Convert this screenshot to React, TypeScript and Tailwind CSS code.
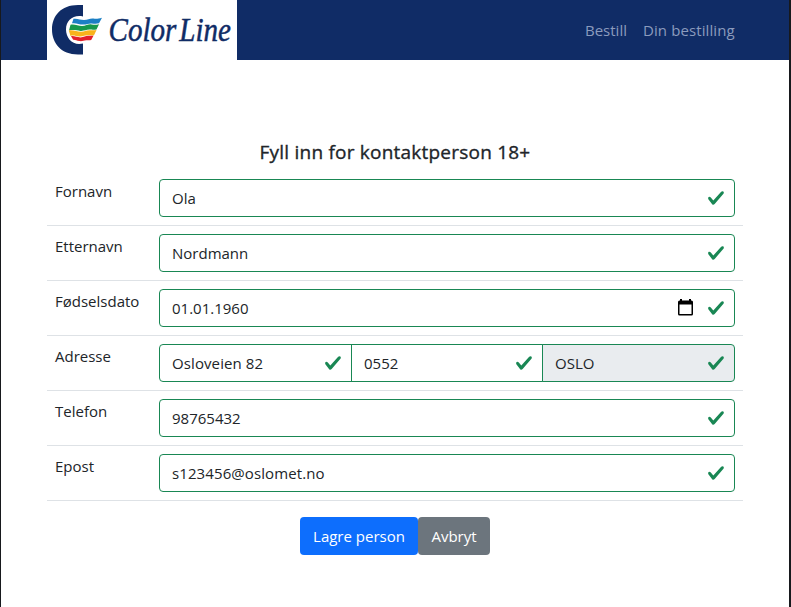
import type { ReactNode } from "react";

function Check() {
  return (
    <svg viewBox="0 0 8 8" className="h-[18px] w-[18px] shrink-0" fill="#198754">
      <path d="M2.3 6.73L.6 4.53c-.4-1.04.46-1.4 1.1-.8l1.1 1.4 3.4-3.8c.6-.63 1.6-.27 1.2.7l-4 4.6c-.43.5-.8.4-1.1.1z" />
    </svg>
  );
}

function CalendarIcon() {
  return (
    <svg viewBox="0 0 15 17" className="mr-[14px] mb-[2px] h-[17px] w-[15px] shrink-0">
      <path d="M2 0h2v1.5h7V0h2v1.5h.5A1.5 1.5 0 0 1 15 3v12a1.5 1.5 0 0 1-1.5 1.5h-12A1.5 1.5 0 0 1 0 15V3a1.5 1.5 0 0 1 1.5-1.5H2zM1.5 5.5V15h12V5.5z" fill="#000" fillRule="evenodd" />
    </svg>
  );
}

function Field({ value, className, text = "", children }: { value: string; className: string; text?: string; children?: ReactNode }) {
  return (
    <div className={`flex h-[38px] items-center border border-[#198754] pl-3 pr-[9px] ${className}`}>
      <span className={`min-w-0 flex-1 whitespace-nowrap leading-6 ${text}`}>{value}</span>
      {children}
      <Check />
    </div>
  );
}

function Row({ label, children }: { label: string; children: ReactNode }) {
  return (
    <div className="flex h-[55px] border-b border-[#dee2e6] px-2 pt-2">
      <div className="w-[104px] shrink-0 whitespace-nowrap leading-6">{label}</div>
      <div className="flex flex-1">{children}</div>
    </div>
  );
}

function Logo() {
  return (
    <svg viewBox="0 0 190 60" className="h-[60px] w-[190px] bg-white" role="img" aria-label="Color Line">
      <path d="M36 5H31C14 5 5 16 5 29.5S14 54.5 31 54.5h5V43.5C26 46 19 38.500 19 29.5S26 14.500 36 16.5z" fill="#102c66" />
      <path d="M26.500 18.800c4-.6 7 1.200 10.500 1.200 4 0 6-2 9.500-1.500 3 .5 5 0 8.500-.8l-3 5.600c-3 .8-5 .3-7.500.1-3-.2-5 1.400-8.500 1.200-4-.2-7-2-11-1.300z" fill="#1b7fc4" />
      <path d="M23.500 24.700c4-1 7.500 1.300 11.500 1.300s6-2 9.500-1.600c3 .3 4 .6 7.500-.2l-2.500 5.200c-3 .8-4 .2-7 .2-3.500 0-5 1.500-9 1.300-4-.2-7-1.500-11.500-.3z" fill="#16984c" />
      <path d="M21.800 30.400c4-1 8.200 1.300 12.200 1.300s5-1.700 9-1.500c2.500.2 4 .3 6.500-.2L47 35.200c-2 .5-4 .1-6 .1-3.500 0-5 1.400-8.500 1.200-3.500-.2-6-1.500-9-.6z" fill="#f9b31b" />
      <path d="M24 36.200c3-.6 6 1.200 9.500 1.200s5-1.700 8-1.600c2 0 3 .2 5-.1L44.200 40c-2 .3-3 .1-5 .2-2.500.2-4 1.300-7 .8-2.500-.4-4-1.400-6-1.200z" fill="#e3202a" />
      <text x="61.500" y="41" textLength="122.500" lengthAdjust="spacingAndGlyphs" className="font-['Liberation_Serif'] text-[34px] italic [word-spacing:-5px]" fill="#102c66" stroke="#102c66" strokeWidth=".5">Color Line</text>
    </svg>
  );
}

export default function App() {
  return (
    <div className="h-[607px] w-[791px] overflow-hidden border-l border-r-2 border-[#17191d] bg-white font-['Open_Sans','Noto_Sans',sans-serif] text-[15px] text-[#212529]">
      <header className="flex h-[60px] items-center justify-between bg-[#102c66] pl-[46px] pr-[54px]">
        <Logo />
        <nav className="flex gap-4 whitespace-nowrap leading-6 text-[#8b9bbd]">
          <a className="w-[42px]">Bestill</a>
          <a className="w-[92px] tracking-[0.1px]">Din bestilling</a>
        </nav>
      </header>
      <main className="px-[46px] pt-[80px]">
        <h1 className="h-[31px] w-[696px] text-center text-[19px] font-medium leading-6 tracking-[0.22px] [-webkit-text-stroke:0.35px]">Fyll inn for kontaktperson 18+</h1>
        <div className="w-[696px]">
          <Row label="Fornavn"><Field value="Ola" className="flex-1 rounded" /></Row>
          <Row label="Etternavn"><Field value="Nordmann" className="flex-1 rounded" /></Row>
          <Row label="Fødselsdato">
            <Field value="01.01.1960" className="flex-1 rounded"><CalendarIcon /></Field>
          </Row>
          <Row label="Adresse">
            <Field value="Osloveien 82" text="tracking-[0.1px]" className="w-[193px] rounded-l" />
            <Field value="0552" className="-ml-px w-[192px]" />
            <Field value="OSLO" className="-ml-px w-[193px] rounded-r bg-[#e9ecef]" />
          </Row>
          <Row label="Telefon"><Field value="98765432" className="flex-1 rounded" /></Row>
          <Row label="Epost"><Field value="s123456@oslomet.no" text="tracking-[0.1px]" className="flex-1 rounded" /></Row>
        </div>
        <div className="mt-4 flex w-[696px] justify-center text-white">
          <button className="h-[38px] w-[118px] whitespace-nowrap rounded bg-[#0d6efd]">Lagre person</button>
          <button className="h-[38px] w-[72px] whitespace-nowrap rounded bg-[#6c757d]">Avbryt</button>
        </div>
      </main>
    </div>
  );
}
